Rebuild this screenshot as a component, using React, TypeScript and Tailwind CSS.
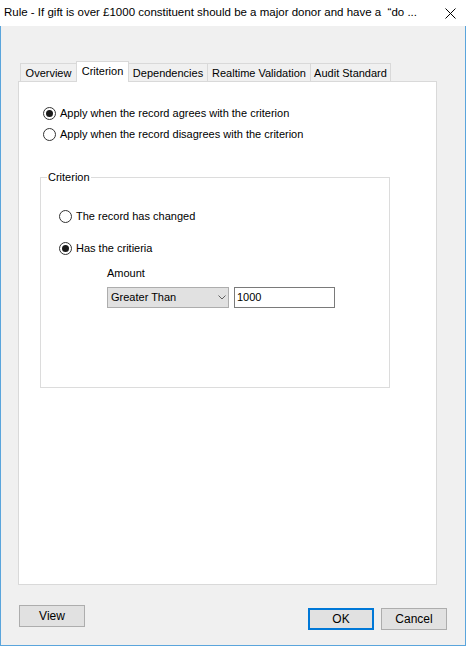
import type React from "react"

const Radio: React.FC<{ checked?: boolean; label: string }> = ({ checked, label }) => (
  <div className="flex h-[21px] items-center gap-[4px]">
    <span className="flex h-[13px] w-[13px] shrink-0 items-center justify-center rounded-full border border-[#333333] bg-white">
      {checked && <span className="h-[7px] w-[7px] rounded-full bg-[#1a1a1a]" />}
    </span>
    <span className="whitespace-nowrap">{label}</span>
  </div>
)

const tabs = [
  { name: "Overview", w: "w-[57px]" },
  { name: "Criterion", w: "w-[53px]", active: true },
  { name: "Dependencies", w: "w-[80px]" },
  { name: "Realtime Validation", w: "w-[104px]" },
  { name: "Audit Standard", w: "w-[81px]" },
]

export default function App() {
  return (
    <div className="flex h-[646px] w-[466px] flex-col bg-[#f0f0f0] font-['Liberation_Sans',Arial,sans-serif] text-[11px] leading-none text-black">
      {/* title bar */}
      <div className="flex h-[26px] shrink-0 items-center bg-white pl-[4px] pr-[10px]">
        <span className="flex-1 whitespace-pre text-[11.5px]">
          Rule - If gift is over £1000 constituent should be a major donor and have a  “do ...
        </span>
        <svg width="11" height="11" viewBox="0 0 11 11" className="mt-[1px] shrink-0">
          <path d="M0.5 0.5 L10.5 10.5 M10.5 0.5 L0.5 10.5" stroke="#000" strokeWidth="1" />
        </svg>
      </div>

      <div className="flex flex-1 flex-col border-x border-b border-[#5aa5dc] pl-[17px] pr-[18px] pt-[35px]">
        {/* tabs */}
        <div className="flex h-[20px] items-end pl-[2px]">
          {tabs.map((t, i) => (
            <div
              key={t.name}
              className={
                t.active
                  ? `relative z-10 -mb-px flex h-[21px] ${t.w} -ml-px items-start justify-center border-x border-t border-[#d9d9d9] bg-white pt-[4px]`
                  : `flex h-[18px] ${t.w} ${i === 0 ? "" : "-ml-px"} items-center justify-center border-x border-t border-[#d9d9d9] bg-[#f0f0f0] pt-[2px]`
              }
            >
              <span className="whitespace-nowrap">{t.name}</span>
            </div>
          ))}
        </div>

        {/* panel */}
        <div className="h-[504px] w-[419px] shrink-0 border border-[#d9d9d9] bg-white pl-[21px] pt-[21px]">
          <div className="pl-[3px]">
            <Radio checked label="Apply when the record agrees with the criterion" />
            <Radio label="Apply when the record disagrees with the criterion" />
          </div>

          <div className="relative mt-[32px] h-[211px] w-[350px] border border-[#dcdcdc] pl-[18px] pt-[28px]">
            <span className="absolute -top-[6px] left-[6px] bg-white px-[1px]">Criterion</span>
            <Radio label="The record has changed" />
            <div className="mt-[11px]">
              <Radio checked label="Has the critieria" />
            </div>
            <div className="ml-[48px]">
              <div className="mt-[7px] h-[15px] leading-[15px]">Amount</div>
              <div className="mt-[6px] flex">
                <div className="flex h-[21px] w-[122px] items-center justify-between border border-[#adadad] bg-[#e1e1e1] pl-[3px] pr-[2px]">
                  <span>Greater Than</span>
                  <svg width="8" height="5" viewBox="0 0 8 5">
                    <path d="M0.5 0.5 L4 4 L7.5 0.5" fill="none" stroke="#606060" strokeWidth="1" />
                  </svg>
                </div>
                <div className="ml-[5px] flex h-[21px] w-[101px] items-center border border-[#7a7a7a] bg-white pl-[2px]">
                  1000
                </div>
              </div>
            </div>
          </div>
        </div>

        {/* buttons */}
        <div className="flex items-start">
          <button className="ml-[1px] mt-[20px] h-[22px] w-[66px] border border-[#adadad] bg-[#e1e1e1] text-[12px]">View</button>
          <div className="flex-1" />
          <button className="mt-[23px] h-[22px] w-[66px] border-2 border-[#0078d7] bg-[#e1e1e1] text-[12px]">OK</button>
          <button className="ml-[7px] mt-[23px] h-[22px] w-[66px] border border-[#adadad] bg-[#e1e1e1] text-[12px]">Cancel</button>
        </div>
      </div>
    </div>
  )
}
